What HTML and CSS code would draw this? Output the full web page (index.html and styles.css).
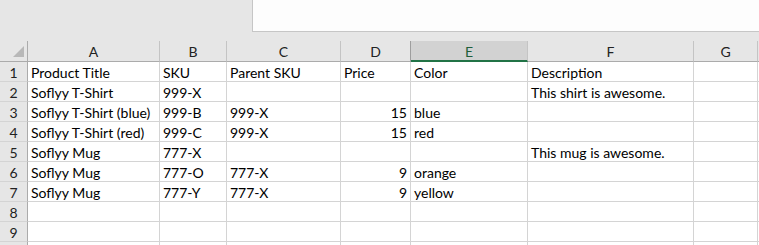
FILE: index.html
```html
<!DOCTYPE html>
<html>
<head>
<meta charset="utf-8">
<link rel="stylesheet" href="styles.css">
</head>
<body>
<div class="top"><div class="formula"></div></div>
<div class="sheet">
  <div class="ch corner"><span class="tri"></span></div>
  <div class="ch">A</div><div class="ch">B</div><div class="ch">C</div><div class="ch">D</div><div class="ch sel">E</div><div class="ch">F</div><div class="ch">G</div><div class="ch last"></div>

  <div class="rh">1</div><div class="c">Product Title</div><div class="c">SKU</div><div class="c">Parent SKU</div><div class="c">Price</div><div class="c">Color</div><div class="c">Description</div><div class="c"></div><div class="c"></div>
  <div class="rh">2</div><div class="c">Soflyy T-Shirt</div><div class="c">999-X</div><div class="c"></div><div class="c"></div><div class="c"></div><div class="c">This shirt is awesome.</div><div class="c"></div><div class="c"></div>
  <div class="rh">3</div><div class="c">Soflyy T-Shirt (blue)</div><div class="c">999-B</div><div class="c">999-X</div><div class="c num">15</div><div class="c">blue</div><div class="c"></div><div class="c"></div><div class="c"></div>
  <div class="rh">4</div><div class="c">Soflyy T-Shirt (red)</div><div class="c">999-C</div><div class="c">999-X</div><div class="c num">15</div><div class="c">red</div><div class="c"></div><div class="c"></div><div class="c"></div>
  <div class="rh">5</div><div class="c">Soflyy Mug</div><div class="c">777-X</div><div class="c"></div><div class="c"></div><div class="c"></div><div class="c">This mug is awesome.</div><div class="c"></div><div class="c"></div>
  <div class="rh">6</div><div class="c">Soflyy Mug</div><div class="c">777-O</div><div class="c">777-X</div><div class="c num">9</div><div class="c">orange</div><div class="c"></div><div class="c"></div><div class="c"></div>
  <div class="rh">7</div><div class="c">Soflyy Mug</div><div class="c">777-Y</div><div class="c">777-X</div><div class="c num">9</div><div class="c">yellow</div><div class="c"></div><div class="c"></div><div class="c"></div>
  <div class="rh">8</div><div class="c"></div><div class="c"></div><div class="c"></div><div class="c"></div><div class="c"></div><div class="c"></div><div class="c"></div><div class="c"></div>
  <div class="rh">9</div><div class="c"></div><div class="c"></div><div class="c"></div><div class="c"></div><div class="c"></div><div class="c"></div><div class="c"></div><div class="c"></div>
  <div class="rh"></div><div class="c"></div><div class="c"></div><div class="c"></div><div class="c"></div><div class="c"></div><div class="c"></div><div class="c"></div><div class="c"></div>
</div>
</body>
</html>
```
FILE: styles.css
```css
html, body {
  margin: 0;
  padding: 0;
  background: #e6e6e6;
  overflow: hidden;
}
body {
  width: 759px;
  height: 245px;
  font-family: Lato, "Open Sans", sans-serif;
  font-size: 14px;
  color: #000;
}
.top {
  height: 41px;
  background: #e6e6e6;
}
.formula {
  margin-left: 252px;
  height: 31px;
  background: #fdfdfd;
  border-left: 1px solid #c6c6c6;
  border-bottom: 1px solid #c6c6c6;
}
.sheet {
  display: grid;
  grid-template-columns: 28px 132px 67px 114px 70px 117px 166px 64px 1fr;
  grid-template-rows: 21px;
  grid-auto-rows: 20px;
  width: 759px;
  height: 204px;
  overflow: hidden;
  background: #fff;
}
.ch {
  background: #e6e6e6;
  border-right: 1px solid #c4c4c4;
  border-bottom: 1px solid #ababab;
  display: flex;
  align-items: center;
  justify-content: center;
  color: #222;
  font-size: 14px;
  padding-top: 1px;
  box-sizing: border-box;
}
.ch.sel {
  background: #d2d2d2;
  border-bottom: 2px solid #217346;
  color: #1e5e3a;
  position: relative;
}
.ch.sel::before {
  content: "";
  position: absolute;
  left: -1px;
  top: 0;
  bottom: -2px;
  width: 1px;
  background: #9e9e9e;
}
.corner {
  position: relative;
  border-right: 1px solid #ababab;
}
.tri {
  position: absolute;
  right: 3px;
  bottom: 4px;
  width: 11px;
  height: 11px;
  background: #b8b8b8;
  clip-path: polygon(100% 0, 100% 100%, 0 100%);
}
.rh {
  background: #e6e6e6;
  border-right: 1px solid #ababab;
  border-bottom: 1px solid #d4d4d4;
  display: flex;
  align-items: center;
  justify-content: center;
  color: #222;
  padding-top: 1px;
  box-sizing: border-box;
}
.c {
  border-right: 1px solid #d4d4d4;
  border-bottom: 1px solid #d4d4d4;
  display: flex;
  align-items: center;
  padding: 1px 3px 0 3px;
  white-space: nowrap;
  box-sizing: border-box;
}
.c.num {
  justify-content: flex-end;
}
```
